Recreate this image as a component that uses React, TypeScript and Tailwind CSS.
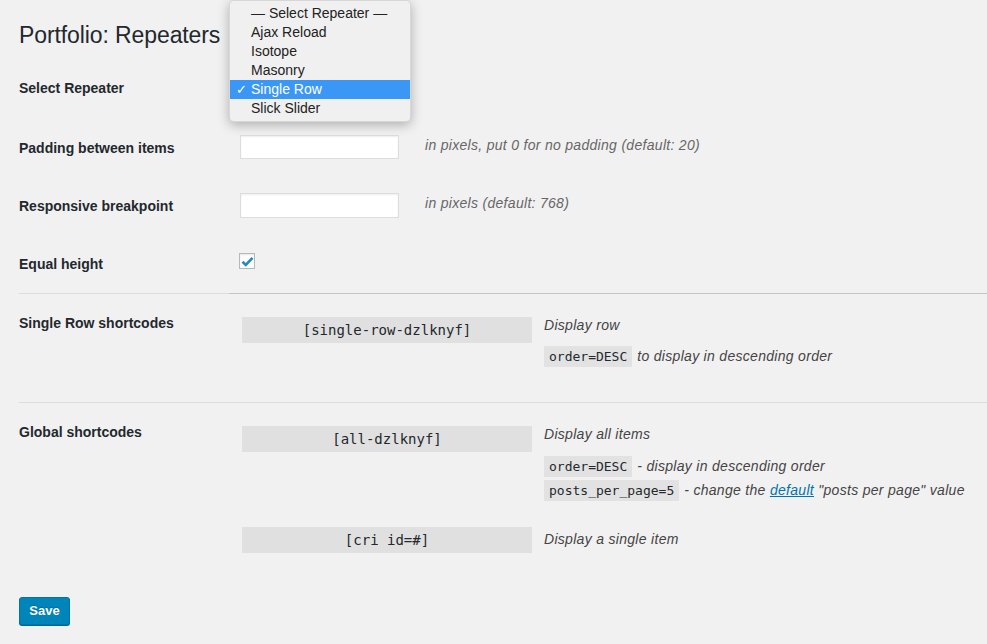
const SANS = "font-['Liberation_Sans',Arial,sans-serif]";
const MONO = "font-['DejaVu_Sans_Mono',Menlo,monospace]";

const OPTIONS = ["— Select Repeater —", "Ajax Reload", "Isotope", "Masonry", "Single Row", "Slick Slider"];

function Label({ children }: { children: React.ReactNode }) {
  return (
    <div className="w-[221px] shrink-0 pt-[20px] text-[14px] leading-[18px] font-bold text-[#23282d]">
      {children}
    </div>
  );
}

function Chip({ children }: { children: React.ReactNode }) {
  return (
    <code
      className={`${MONO} inline-block h-[21px] px-[5px] bg-[#e2e2e2] text-[13px] leading-[21px] not-italic tracking-normal text-[#23282d]`}
    >
      {children}
    </code>
  );
}

function ShortcodeBox({ children }: { children: React.ReactNode }) {
  return (
    <div
      className={`${MONO} ml-[2px] w-[290px] h-[26px] shrink-0 bg-[#e0e0e0] text-center text-[14px] leading-[26px] text-[#23282d]`}
    >
      {children}
    </div>
  );
}

function Dropdown() {
  return (
    <div className="absolute left-[229px] top-0 w-[182px] h-[122px] py-[3px] rounded-[5px] bg-[#f0f0f0] border border-black/10 shadow-[0_3px_12px_rgba(0,0,0,0.28)]">
      {OPTIONS.map((opt) => {
        const active = opt === "Single Row";
        return (
          <div
            key={opt}
            className={`relative h-[19px] pl-[21px] text-[14px] leading-[19px] ${
              active ? "bg-[#3b97f5] text-white" : "text-[#222]"
            }`}
          >
            {active && <span className="absolute left-[6px] top-0 text-[13px]">✓</span>}
            {opt}
          </div>
        );
      })}
    </div>
  );
}

export default function App() {
  return (
    <div className={`${SANS} relative min-h-[644px] bg-[#f1f1f1] pl-[19px] text-[#23282d]`}>
      <h1 className="pt-[21px] text-[23px] leading-[29px] font-normal tracking-[-0.1px] text-[#23282d]">
        Portfolio: Repeaters
      </h1>

      <div className="mt-[9px] flex h-[60px]">
        <Label>Select Repeater</Label>
      </div>

      <div className="flex h-[58px]">
        <Label>Padding between items</Label>
        <input className="mt-[16px] w-[159px] h-[24px] bg-white border border-[#ddd] shadow-[inset_0_1px_2px_rgba(0,0,0,0.07)]" />
        <p className="ml-[26px] pt-[17px] text-[14px] leading-[18px] italic tracking-[0.3px] text-[#666]">
          in pixels, put 0 for no padding (default: 20)
        </p>
      </div>

      <div className="flex h-[58px]">
        <Label>Responsive breakpoint</Label>
        <input className="mt-[16px] w-[159px] h-[25px] bg-white border border-[#ddd] shadow-[inset_0_1px_2px_rgba(0,0,0,0.07)]" />
        <p className="ml-[26px] pt-[17px] text-[14px] leading-[18px] italic tracking-[0.3px] text-[#666]">
          in pixels (default: 768)
        </p>
      </div>

      <div className="flex h-[58px]">
        <Label>Equal height</Label>
        <div className="mt-[18px] -ml-[1px] flex items-center justify-center w-[16px] h-[16px] bg-white border border-[#b4b9be] shadow-[inset_0_1px_2px_rgba(0,0,0,0.1)]">
          <svg width="13" height="11" viewBox="0 0 13 11">
            <path d="M1.5 5.8 L4.8 9 L11.5 1.8" fill="none" stroke="#1e8cbe" strokeWidth="2.6" />
          </svg>
        </div>
      </div>

      <div className="flex h-px">
        <div className="w-[210px] bg-[#dcdcdc]" />
        <div className="flex-1 bg-[#c6c6c6]" />
      </div>

      <div className="flex h-[108px]">
        <Label>Single Row shortcodes</Label>
        <div className="flex pt-[23px]">
          <ShortcodeBox>[single-row-dzlknyf]</ShortcodeBox>
          <div className="ml-[12px] text-[14px] italic tracking-[0.3px] text-[#444]">
            <p className="leading-[17px]">Display row</p>
            <p className="mt-[12px] flex items-center">
              <Chip>order=DESC</Chip>
              <span className="ml-[5px]">to display in descending order</span>
            </p>
          </div>
        </div>
      </div>

      <div className="h-px bg-[#dcdcdc]" />

      <div className="flex">
        <Label>Global shortcodes</Label>
        <div className="pt-[23px]">
          <div className="flex">
            <ShortcodeBox>[all-dzlknyf]</ShortcodeBox>
            <div className="ml-[12px] text-[14px] italic tracking-[0.3px] text-[#444]">
              <p className="leading-[16px]">Display all items</p>
              <p className="mt-[14px] flex items-center">
                <Chip>order=DESC</Chip>
                <span className="ml-[5px]">- display in descending order</span>
              </p>
              <p className="mt-[3px] flex items-center">
                <Chip>posts_per_page=5</Chip>
                <span className="ml-[5px]">
                  - change the{" "}
                  <a href="#" className="text-[#0073aa] underline">
                    default
                  </a>{" "}
                  "posts per page" value
                </span>
              </p>
            </div>
          </div>
          <div className="mt-[26px] flex">
            <ShortcodeBox>[cri id=#]</ShortcodeBox>
            <p className="ml-[12px] pt-[3px] text-[14px] leading-[18px] italic tracking-[0.3px] text-[#444]">
              Display a single item
            </p>
          </div>
        </div>
      </div>

      <button className="mt-[44px] w-[51px] h-[28px] rounded-[3px] bg-[#0085ba] border border-[#0073aa] shadow-[0_1px_0_#006799] text-[13px] font-bold text-white [text-shadow:0_-1px_1px_#006799]">
        Save
      </button>

      <Dropdown />
    </div>
  );
}
